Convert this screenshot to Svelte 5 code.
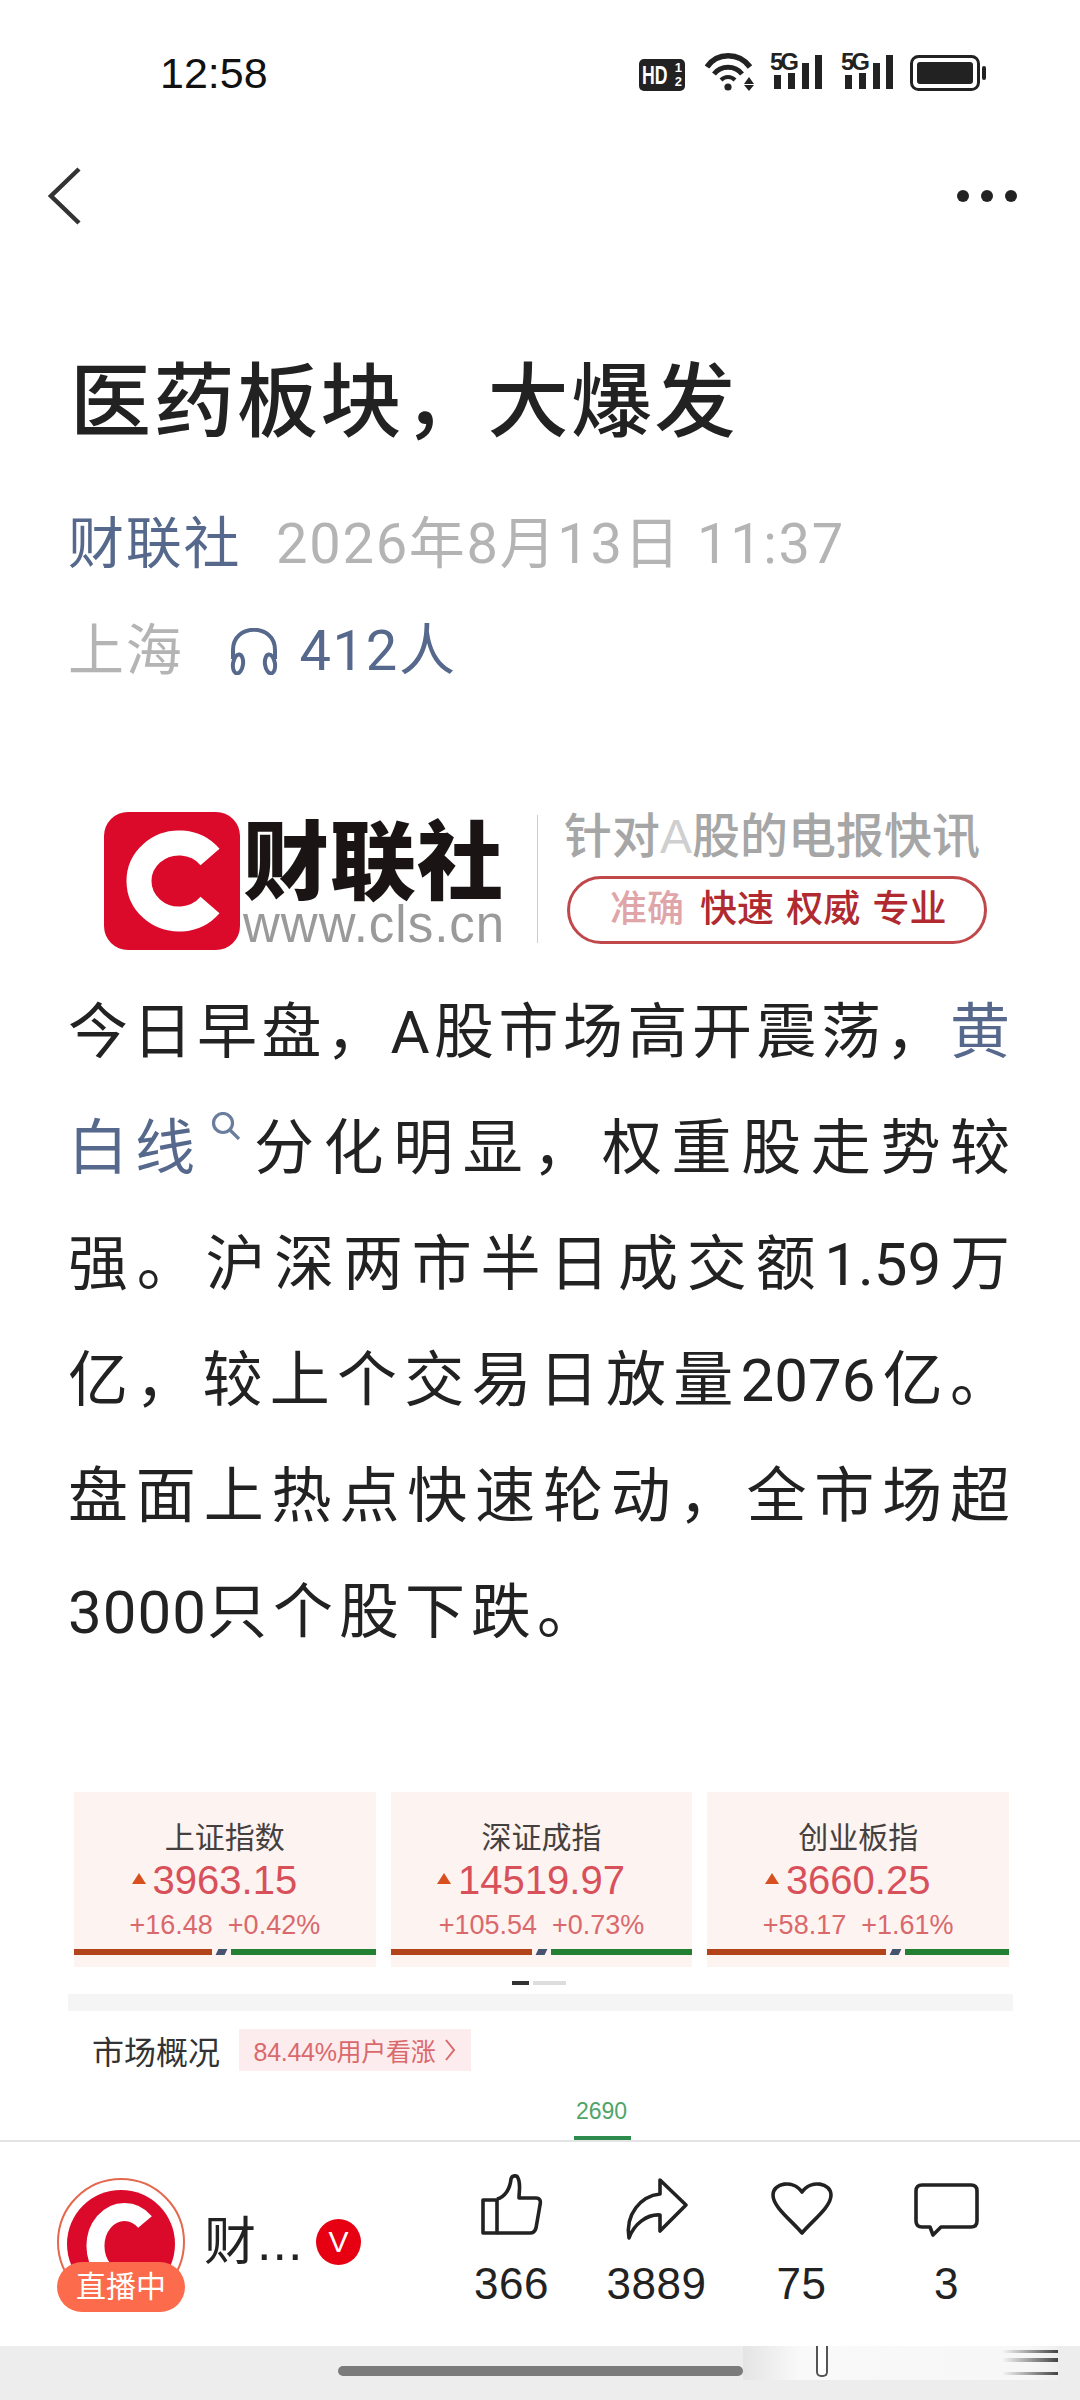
<script>
  const cards = [
    { name: '上证指数', val: '3963.15', a: '+16.48', b: '+0.42%', r: 138 },
    { name: '深证成指', val: '14519.97', a: '+105.54', b: '+0.73%', r: 141 },
    { name: '创业板指', val: '3660.25', a: '+58.17', b: '+1.61%', r: 179 }
  ];
</script>

{#snippet signal()}
  <div class="sig">
    <i>5G</i>
    <svg width="52" height="37" viewBox="0 0 52 37" fill="#222"><rect x="4" y="22" width="7" height="14"/><rect x="18" y="20" width="7" height="16"/><rect x="32" y="10" width="7" height="26"/><rect x="45" y="2" width="7" height="34"/></svg>
  </div>
{/snippet}

<div class="page">
  <div class="status">
    <span class="time">12:58</span>
    <div class="sicons">
      <span class="hd"><b>HD</b><small>1<br />2</small></span>
      <svg class="wifi" width="50" height="38" viewBox="0 0 50 38"><g fill="none" stroke="#222"><path stroke-width="5.5" d="M2 14 C12 -1 34 -1 45 14"/><path stroke-width="5" d="M9 21 C16 12 30 12 37 21"/><path stroke-width="4" d="M16 27 C20 23 26 23 30 27"/></g><circle cx="23" cy="34" r="3.6" fill="#222"/><path d="M44 24l5 7h-10zM44 38l5-6h-10z" fill="#222"/></svg>
      {@render signal()}
      {@render signal()}
      <svg class="batt" width="76" height="36" viewBox="0 0 76 36"><rect x="1.5" y="1.5" width="67" height="33" rx="7" fill="none" stroke="#222" stroke-width="3"/><rect x="7" y="7" width="56" height="22" rx="3" fill="#222"/><rect x="72" y="11" width="4" height="14" rx="2" fill="#222"/></svg>
    </div>
  </div>

  <div class="nav">
    <svg width="36" height="60" viewBox="0 0 36 60"><path d="M33 3 L5 30 L33 57" fill="none" stroke="#333" stroke-width="4.5"/></svg>
    <div class="dots"><b></b><b></b><b></b></div>
  </div>

  <h1>医药板块，大爆发</h1>

  <div class="meta">
    <span class="blue">财联社</span><span class="gray date">2026年8月13日 11:37</span>
  </div>
  <div class="meta second">
    <span class="gray">上海</span>
    <span class="listen blue">
      <svg width="48" height="47" viewBox="0 0 48 47" fill="none" stroke="#56698c" stroke-width="4"><path d="M3 31 V22 C3 -5 45 -5 45 22 V31"/><ellipse cx="8" cy="36" rx="5" ry="9.5" transform="rotate(8 8 36)"/><ellipse cx="40" cy="36" rx="5" ry="9.5" transform="rotate(-8 40 36)"/></svg>
      <span>412人</span>
    </span>
  </div>

  <div class="banner">
    <svg class="logo" width="136" height="138" viewBox="0 0 136 138"><rect width="136" height="138" rx="24" fill="#dc0a2a"/><path d="M106 45 A40 38 0 1 0 106 93" fill="none" stroke="#fff" stroke-width="25"/></svg>
    <div class="brand">
      <span class="bname">财联社</span>
      <span class="url">www.cls.cn</span>
    </div>
    <div class="vline"></div>
    <div class="slogan">
      <span class="s1">针对<span class="fa">A</span>股的电报快讯</span>
      <span class="pill"><em>准确</em>快速 权威 专业</span>
    </div>
  </div>

  <div class="body">
    <div class="ln">今日早盘，A股市场高开震荡，<span class="blue">黄</span></div>
    <div class="ln l2">
      <span class="blue bx">白线</span>
      <svg class="search" width="30" height="28" viewBox="0 0 30 28" fill="none" stroke="#6a7d9c" stroke-width="3.2"><circle cx="12" cy="11" r="9.5"/><path d="M19 18l9 9"/></svg>
      <span class="rest">分化明显，权重股走势较</span>
    </div>
    <div class="ln">强。沪深两市半日成交额1.59万</div>
    <div class="ln">亿，较上个交易日放量2076亿。</div>
    <div class="ln">盘面上热点快速轮动，全市场超</div>
    <div class="ln last"><span class="dg">3000</span>只个股下跌。</div>
  </div>

  <div class="cards">
    {#each cards as c}
      <div class="card">
        <div class="cname">{c.name}</div>
        <div class="cval"><span class="tri"></span>{c.val}</div>
        <div class="cchg"><span>{c.a}</span><span>{c.b}</span></div>
        <div class="bar">
          <span class="red" style="width:{c.r}px"></span>
          <span class="mid"></span>
          <span class="green"></span>
        </div>
      </div>
    {/each}
  </div>
  <div class="pager"><i class="on"></i><i></i></div>
  <div class="sep"></div>
  <div class="market">
    <span class="mt">市场概况</span>
    <span class="tag">84.44%用户看涨<svg width="12" height="24" viewBox="0 0 12 24" fill="none" stroke="#d9696c" stroke-width="2"><path d="M2 2l8 10-8 10"/></svg></span>
  </div>
  <div class="num">2690</div>

  <div class="footer">
    <div class="gbar"></div>
    <div class="author">
      <div class="avatar">
        <svg width="128" height="133" viewBox="0 0 128 133"><circle cx="64" cy="64" r="63" fill="#fff" stroke="#e4684d" stroke-width="2"/><circle cx="64" cy="66" r="54" fill="#dc0a2a"/><path d="M88 44 A29 34 0 1 0 88 92" fill="none" stroke="#fff" stroke-width="18"/></svg>
        <span class="live">直播中</span>
      </div>
      <span class="aname">财...</span>
      <span class="v">V</span>
    </div>
    <div class="actions">
      <div class="act">
        <svg width="66" height="66" viewBox="0 0 66 66" fill="none" stroke="#222" stroke-width="3.6" stroke-linejoin="round"><g transform="translate(2 1)"><path d="M2 25 H16 V58 H2 Z"/><path d="M16 24 C24 22 29 14 30 4 C31 0 36 0 37 3 C40 9 38 16 38 23 H55 C59 23 60 26 59 30 L55 53 C54 57 52 58 49 58 H16"/></g></svg>
        <span>366</span>
      </div>
      <div class="act">
        <svg width="66" height="66" viewBox="0 0 66 66" fill="none" stroke="#222" stroke-width="3.6" stroke-linejoin="round"><g transform="translate(3 4)"><path d="M33 2 L59 27 L33 53 V37 C20 36 7 46 2 60 C-2 36 14 18 33 16 Z"/></g></svg>
        <span>3889</span>
      </div>
      <div class="act">
        <svg width="66" height="66" viewBox="0 0 66 66" fill="none" stroke="#222" stroke-width="3.6" stroke-linejoin="round"><g transform="translate(2 8)"><path d="M31 51 C20 38 2 25 2 13 C2 1 22 -3 31 10 C40 -3 60 1 60 13 C60 25 42 38 31 51 Z"/></g></svg>
        <span>75</span>
      </div>
      <div class="act">
        <svg width="66" height="66" viewBox="0 0 66 66" fill="none" stroke="#222" stroke-width="3.6" stroke-linejoin="round"><g transform="translate(1 9)"><path d="M7 2 H56 C60 2 62 4 62 8 V38 C62 42 60 44 56 44 H26 L18 52 L15 44 H7 C3 44 1 42 1 38 V8 C1 4 3 2 7 2 Z"/></g></svg>
        <span>3</span>
      </div>
    </div>
  </div>
  <div class="gesture">
    <div class="ghost">
      <span class="gv"></span>
      <span class="gh g1"></span><span class="gh g2"></span><span class="gh g3"></span>
    </div>
    <div class="handle"></div>
  </div>
</div>

<style>
  :global(body) { margin: 0; background: #fff; }
  .page {
    width: 1080px; height: 2400px; overflow: hidden; display: flex; flex-direction: column;
    font-family: "Liberation Sans", "Noto Sans CJK SC", sans-serif; color: #222; background: #fff;
  }
  .page > * { flex: none; }
  .status { height: 146px; box-sizing: border-box; padding: 50px 94px 0 160px; display: flex; justify-content: space-between; align-items: flex-start; }
  .time { font-size: 43px; line-height: 46px; color: #111; }
  .sicons { display: flex; align-items: flex-start; margin-top: 3px; }
  .hd { background: #222; color: #fff; border-radius: 5px; width: 46px; height: 32px; margin-top: 6px; position: relative; display: block; overflow: hidden; }
  .hd b { position: absolute; left: 3px; top: 3px; font: bold 26px/26px "Liberation Sans"; transform: scaleX(.68); transform-origin: left; }
  .hd small { position: absolute; right: 3px; top: 2px; font: bold 13px/13.5px "Liberation Sans"; text-align: center; }
  .wifi { margin-left: 20px; }
  .sig { position: relative; width: 52px; height: 37px; margin-left: 15px; }
  .sig + .sig { margin-left: 19px; }
  .sig i { position: absolute; left: 0; top: -2px; font: bold 24px/22px "Liberation Sans"; letter-spacing: -3px; color: #222; background: #fff; z-index: 1; padding-right: 2px; }
  .batt { margin-left: 17px; margin-top: 2px; }
  .nav { height: 100px; display: flex; justify-content: space-between; align-items: center; padding: 0 63px 0 46px; }
  .dots { display: flex; gap: 12px; }
  .dots b { width: 12px; height: 12px; border-radius: 50%; background: #222; }
  h1 { margin: 102px 0 0 70px; font-size: 81px; line-height: 108px; font-weight: 500; color: #222; letter-spacing: 2.5px; height: 108px; }
  .meta { margin: 53px 0 0 68px; font-family: Roboto, "Noto Sans CJK SC", sans-serif; font-size: 56px; line-height: 70px; display: flex; align-items: center; letter-spacing: 1.7px; height: 70px; }
  .second { margin-top: 37px; }
  .blue { color: #56698c; }
  .gray { color: #b4b4b4; }
  .date { margin-left: 35px; }
  .listen { margin-left: 47px; display: flex; align-items: center; gap: 21px; }
  .banner { margin: 125px 0 0 104px; height: 140px; display: flex; align-items: flex-start; }
  .logo { flex: none; margin-top: 1px; }
  .brand { display: flex; flex-direction: column; width: 262px; margin-left: 3px; }
  .bname { font: 900 86px/90px "Noto Sans CJK SC", sans-serif; color: #1b1414; white-space: nowrap; letter-spacing: 1px; }
  .url { font-size: 51px; line-height: 48px; color: #9a9a9a; letter-spacing: 1px; white-space: nowrap; }
  .vline { width: 1px; height: 128px; background: #ccc; margin: 4px 0 0 32px; flex: none; }
  .slogan { margin-left: 26px; display: flex; flex-direction: column; gap: 13px; width: 430px; }
  .s1 { font-size: 48px; line-height: 52px; color: #a6a6a6; font-weight: 500; white-space: nowrap; }
  .fa { color: #cfcfcf; }
  .pill { border: 3px solid #c0484a; border-radius: 34px; height: 68px; width: 420px; margin-left: 3px; box-sizing: border-box; font-size: 37px; line-height: 62px; color: #b02a30; padding-left: 40px; white-space: nowrap; font-weight: 500; word-spacing: 2px; }
  .pill em { font-style: normal; color: #e0a5a8; margin-right: 16px; }
  .body { margin: 24px 0 0 68px; width: 942px; font-family: Roboto, "Noto Sans CJK SC", sans-serif; font-size: 60px; color: #222; }
  .ln { height: 116px; line-height: 116px; text-align: justify; text-align-last: justify; white-space: nowrap; }
  .l2 { display: flex; align-items: flex-start; }
  .bx { width: 134px; letter-spacing: 7px; flex: none; text-align-last: left; }
  .search { flex: none; margin: 21px 0 0 9px; }
  .rest { margin-left: 13px; flex: 1; display: block; text-align-last: justify; }
  .ln.last { text-align-last: left; letter-spacing: 6px; }
  .dg { letter-spacing: 1px; }
  .cards { margin: 121px 0 0 74px; width: 935px; display: flex; gap: 15px; }
  .card { flex: 1; height: 175px; box-sizing: border-box; background: #fdf3f1; text-align: center; padding-top: 29px; position: relative; }
  .cname { font-size: 30px; line-height: 34px; color: #454040; }
  .cval { font-size: 40px; line-height: 44px; color: #d8505a; margin-top: 3px; position: relative; display: inline-block; }
  .tri { position: absolute; left: -21px; top: 15px; border-left: 7px solid transparent; border-right: 7px solid transparent; border-bottom: 11px solid #d8501f; }
  .cchg { display: flex; justify-content: center; gap: 15px; font-size: 27px; line-height: 30px; color: #d9696c; margin-top: 8px; }
  .bar { position: absolute; left: 0; right: 0; top: 157px; height: 6px; display: flex; gap: 5px; }
  .red { background: #b2431a; display: block; }
  .mid { width: 9px; background: #46536e; transform: skewX(-25deg); display: block; }
  .green { flex: 1; background: #238033; display: block; }
  .pager { display: flex; gap: 4px; margin: 14px 0 0 512px; height: 4px; }
  .pager i { width: 33px; height: 4px; background: #ddd; display: block; }
  .pager .on { width: 17px; background: #333; }
  .sep { margin: 9px 0 0 68px; width: 945px; height: 17px; background: #f5f5f5; }
  .market { margin: 18px 0 0 92px; display: flex; align-items: center; gap: 19px; height: 42px; }
  .mt { font-size: 32px; color: #333; }
  .tag { background: #fdeced; color: #d9696c; font-size: 25px; height: 42px; width: 232px; display: flex; align-items: center; justify-content: center; gap: 9px; letter-spacing: -.3px; white-space: nowrap; }
  .num { margin: 27px 0 0 576px; font-size: 23px; line-height: 26px; color: #4fa56a; height: 26px; }
  .footer { position: relative; height: 206px; border-top: 2px solid #e4e4e4; margin-top: 16px; box-sizing: border-box; }
  .gbar { position: absolute; left: 574px; top: -6px; width: 57px; height: 4px; background: #2e8b4e; }
  .author { display: flex; align-items: flex-start; padding: 36px 0 0 57px; }
  .avatar { position: relative; width: 128px; height: 134px; flex: none; }
  .avatar svg { display: block; }
  .live { position: absolute; left: 0; bottom: 0; width: 128px; height: 50px; border-radius: 25px; background: #fb6b4c; color: #fff; font-size: 30px; line-height: 50px; text-align: center; }
  .aname { font-size: 52px; line-height: 72px; margin: 28px 0 0 19px; width: 112px; color: #222; white-space: nowrap; letter-spacing: 1px; }
  .v { width: 45px; height: 46px; border-radius: 50%; background: #e60012; color: #fff; font-size: 30px; line-height: 46px; text-align: center; flex: none; margin-top: 41px; }
  .actions { position: absolute; left: 439px; top: 0; display: flex; }
  .act { width: 145px; display: flex; flex-direction: column; align-items: center; padding-top: 32px; }
  .act svg { margin-bottom: 18px; overflow: visible; }
  .act span { font-size: 44px; line-height: 52px; color: #222; letter-spacing: .5px; }
  .gesture { height: 54px; background: #ededed; position: relative; }
  .handle { position: absolute; left: 338px; top: 20px; width: 405px; height: 10px; border-radius: 5px; background: #7b7b7b; }
  .ghost { position: absolute; left: 743px; top: 0; width: 315px; height: 34px; background: linear-gradient(90deg, #e4e4e4, #f9f9f9 18%, #f7f7f7 90%, #efefef); }
  .gv { position: absolute; left: 73px; top: 0; width: 12px; height: 31px; border: 2px solid #555; border-top: 0; border-radius: 0 0 5px 5px; background: #fff; box-sizing: border-box; }
  .gh { position: absolute; right: 0; width: 56px; height: 3px; background: linear-gradient(90deg, transparent, #444); }
  .g1 { top: 4px; }
  .g2 { top: 12px; height: 4px; }
  .g3 { top: 26px; }
</style>
